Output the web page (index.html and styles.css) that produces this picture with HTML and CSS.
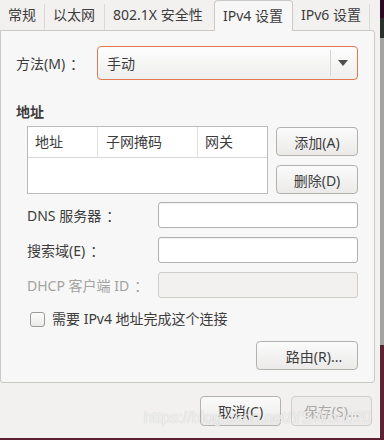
FILE: index.html
```html
<!DOCTYPE html>
<html lang="zh-CN">
<head>
    <meta charset="UTF-8">
    <title>IPv4 设置</title>
    <link rel="stylesheet" href="styles.css">
</head>
<body>
<div class="screen">
    <div class="window">
        <div class="tabs">
            <div class="tab">常规</div>
            <div class="tab">以太网</div>
            <div class="tab">802.1X 安全性</div>
            <div class="tab active">IPv4 设置</div>
            <div class="tab">IPv6 设置</div>
        </div>
        <div class="page">
            <div class="method">
                <span class="method-label">方法(M)<span class="colon">：</span></span>
                <div class="combo">
                    <span class="combo-text">手动</span>
                    <span class="combo-sep"></span>
                    <span class="combo-arrow"></span>
                </div>
            </div>

            <div class="section-title">地址</div>
            <div class="addr">
                <div class="addr-table">
                    <div class="addr-head">
                        <div class="col c1">地址</div>
                        <div class="col c2">子网掩码</div>
                        <div class="col c3">网关</div>
                    </div>
                </div>
                <div class="addr-buttons">
                    <button class="btn">添加(A)</button>
                    <button class="btn">删除(D)</button>
                </div>
            </div>

            <div class="form">
                <label class="form-label">DNS 服务器<span class="colon">：</span></label>
                <div class="entry"></div>
                <label class="form-label">搜索域(E)<span class="colon">：</span></label>
                <div class="entry"></div>
                <label class="form-label disabled">DHCP 客户端 ID<span class="colon">：</span></label>
                <div class="entry disabled"></div>
            </div>

            <div class="check-row">
                <span class="checkbox"></span>
                <span>需要 IPv4 地址完成这个连接</span>
            </div>

            <div class="routes-row">
                <button class="btn routes">路由(R)...</button>
            </div>
        </div>

        <div class="footer">
            <button class="btn footer-btn">取消(C)</button>
            <button class="btn footer-btn" disabled>保存(S)...</button>
            <span class="watermark">https://blog.csdn.net/YSWorld20</span>
        </div>
    </div>
    <div class="strip">
        <div class="s1"></div>
        <div class="s2"></div>
        <div class="s3"></div>
        <div class="s4"></div>
    </div>
</div>
<div class="desk-bottom"></div>
</body>
</html>
```

FILE: styles.css
```css
html, body {
    margin: 0;
    padding: 0;
}
body {
    width: 384px;
    height: 440px;
    overflow: hidden;
    font-family: "Noto Sans", "Noto Sans CJK SC", sans-serif;
    font-size: 14px;
    color: #3c3c3c;
    background: #f2f1f0;
}
.screen {
    display: flex;
    height: 438px;
}
.desk-bottom {
    height: 2px;
    background: #5a2030;
}

/* window */
.window {
    width: 380px;
    display: flex;
    flex-direction: column;
    background: #f2f1f0;
    position: relative;
}
.strip {
    width: 4px;
    display: flex;
    flex-direction: column;
}
.s1 { height: 18px; background: #2c0b20; }
.s2 { height: 20px; background: #2b2f2c; }
.s3 { height: 307px; background: #a3a3a3; }
.s4 { flex: 1; background: #5c2333; }

/* tabs */
.tabs {
    display: flex;
    height: 30px;
    margin-right: 5px;
    position: relative;
    z-index: 1;
}
.tab {
    height: 30px;
    line-height: 30px;
    padding: 0 8px;
    white-space: nowrap;
    box-sizing: border-box;
    position: relative;
}
.tab::after {
    content: "";
    position: absolute;
    right: 0;
    top: 4px;
    bottom: 0;
    width: 1px;
    background: #dcdad7;
}
.tab:nth-child(1) { width: 45px; }
.tab:nth-child(2) { width: 60px; }
.tab:nth-child(3) { width: 109px; }
.tab:nth-child(4) { width: 79px; }
.tab:nth-child(5) { width: 77px; }
.tab.active {
    height: 31px;
    background: #f7f7f7;
    border: 1px solid #cbc9c6;
    border-bottom: none;
    border-radius: 4px 4px 0 0;
    padding-left: 8px;
}
.tab.active::after,
.tab:nth-child(3)::after { display: none; }

/* the theme draws the full-width colon centred in its cell */
.colon {
    padding-left: 5px;
}

/* notebook page */
.page {
    height: 353px;
    margin-right: 5px;
    box-sizing: border-box;
    border: 1px solid #cbc9c6;
    border-radius: 0 3px 3px 3px;
    background: #f7f7f7;
    padding: 15px 16px 0 15px;
}
.method {
    display: flex;
    align-items: center;
}
.method-label {
    width: 81px;
    white-space: nowrap;
}
.combo {
    flex: 1;
    height: 34px;
    box-sizing: border-box;
    border: 1px solid #e0794f;
    border-radius: 4px;
    background: linear-gradient(#fdfdfd, #efefee);
    display: flex;
    align-items: center;
    padding-left: 9px;
}
.combo-text {
    flex: 1;
}
.combo-sep {
    width: 1px;
    height: 26px;
    background: #d8d6d3;
}
.combo-arrow {
    width: 0;
    height: 0;
    margin: 0 9px 0 7px;
    border-left: 5px solid transparent;
    border-right: 5px solid transparent;
    border-top: 6px solid #4e4e4e;
}

.section-title {
    font-weight: bold;
    margin-top: 22px;
    line-height: 20px;
}

/* address table */
.addr {
    display: flex;
    gap: 8px;
    margin-top: 4px;
    padding-left: 11px;
}
.addr-table {
    width: 241px;
    height: 68px;
    box-sizing: border-box;
    border: 1px solid #bdbbb8;
    background: #fff;
}
.addr-head {
    display: flex;
    height: 30px;
    border-bottom: 1px solid #dcdad7;
}
.col {
    line-height: 30px;
    padding-left: 7px;
    box-sizing: border-box;
}
.c1 { width: 70px; border-right: 1px solid #e3e1de; }
.c2 { width: 100px; border-right: 1px solid #e3e1de; padding-left: 8px; }
.c3 { flex: 1; }
.addr-buttons {
    flex: 1;
    display: flex;
    flex-direction: column;
    gap: 9px;
    padding-top: 1px;
}

/* buttons */
.btn {
    font: inherit;
    color: #3c3c3c;
    height: 29px;
    box-sizing: border-box;
    border: 1px solid #b4b2af;
    border-radius: 4px;
    background: linear-gradient(#fbfbfb, #ebeae9);
    padding: 0;
}
.btn:disabled {
    color: #a9a8a6;
    border-color: #d0cecb;
    background: #eeedec;
}

/* form */
.form {
    display: grid;
    grid-template-columns: 131px 1fr;
    row-gap: 9px;
    align-items: center;
    margin-top: 8px;
    padding-left: 11px;
}
.form-label {
    white-space: nowrap;
}
.form-label.disabled {
    color: #a3a2a0;
}
.entry {
    height: 26px;
    box-sizing: border-box;
    border: 1px solid #b3b1ae;
    border-radius: 3px;
    background: #fff;
    box-shadow: inset 0 1px 1px rgba(0, 0, 0, 0.06);
}
.entry.disabled {
    background: #f2f1f0;
    border-color: #cfcdca;
    box-shadow: none;
}

/* checkbox */
.check-row {
    display: flex;
    align-items: center;
    gap: 7px;
    margin-top: 12px;
    padding-left: 14px;
    line-height: 18px;
}
.checkbox {
    width: 15px;
    height: 15px;
    box-sizing: border-box;
    border: 1px solid #9d9b98;
    border-radius: 3px;
    background: linear-gradient(#fdfdfd, #ebeae9);
}

.routes-row {
    display: flex;
    justify-content: flex-end;
    margin-top: 13px;
}
.routes {
    width: 102px;
    height: 29px;
    padding-left: 14px;
}

/* footer */
.footer {
    flex: 1;
    display: flex;
    justify-content: flex-end;
    align-items: center;
    gap: 10px;
    padding-right: 8px;
    padding-top: 1px;
}
.footer-btn {
    width: 81px;
    height: 30px;
}
.watermark {
    position: absolute;
    right: 8px;
    bottom: 11px;
    font-family: "Liberation Sans", sans-serif;
    font-size: 16px;
    color: rgba(255, 255, 255, 0.75);
    text-shadow: 0 0 1px rgba(120, 120, 120, 0.45);
    pointer-events: none;
}
```
